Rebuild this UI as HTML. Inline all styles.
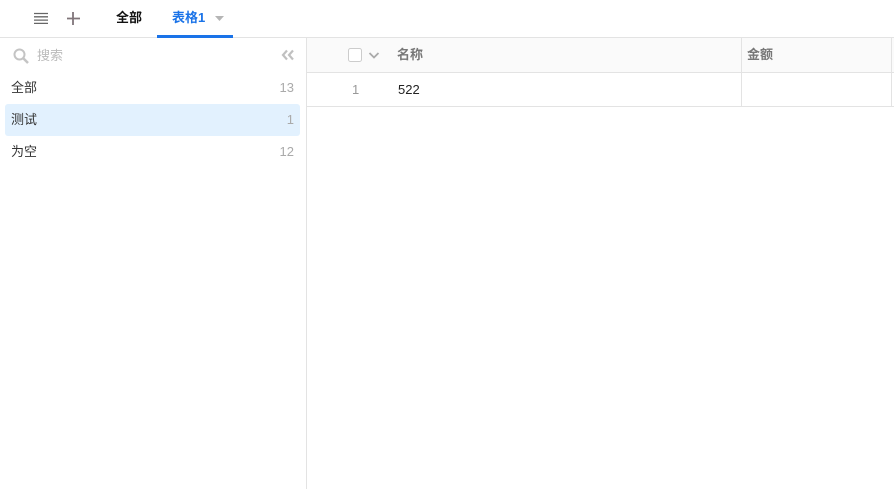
<!DOCTYPE html>
<html><head><meta charset="utf-8">
<style>
html,body{margin:0;padding:0;background:#fff}
body{width:894px;height:489px;position:relative;overflow:hidden;font-family:"Liberation Sans","Noto Sans CJK SC",sans-serif;font-size:13px;color:#333}
.a{position:absolute;white-space:nowrap;line-height:18px;z-index:2}
.l{position:absolute;background:#e3e3e3}
svg{position:absolute;overflow:visible;z-index:3}
</style></head><body>
<svg style="left:0;top:0" width="894" height="489" fill="none">
<path d="M34 13.500H48M34 16.800H48M34 20.100H48M34 23.400H48" stroke="#666" stroke-width="1.300"/>
<path d="M73 12V25M67 18.500H80" stroke="#80757a" stroke-width="1.800"/>
<path d="M215 16H224L219.500 21Z" fill="#b5b5b5"/>
<circle cx="19.500" cy="54.500" r="5" stroke="#c4c4c4" stroke-width="2"/>
<path d="M23 58L28 63" stroke="#c4c4c4" stroke-width="2.500"/>
<path d="M287 50.500L283 55L287 59.500M293 50.500L289 55L293 59.500" stroke="#c0c0c0" stroke-width="2.200"/>
<rect x="348.500" y="48.500" width="13" height="13" rx="2" stroke="#ccc" fill="#fff"/>
<path d="M369.500 53L374 57.500L378.500 53" stroke="#aaa" stroke-width="1.800"/>
</svg>
<div class="a" style="left:116px;top:9px;font-weight:bold;color:#111">全部</div>
<div class="a" style="left:172px;top:9px;font-weight:bold;color:#1a73e8">表格1</div>
<div class="l" style="left:0;top:37px;width:894px;height:1px"></div>
<div style="position:absolute;left:157px;top:35px;width:76px;height:3px;background:#1a73e8"></div>
<div class="l" style="left:306px;top:38px;width:1px;height:451px"></div>
<div class="a" style="left:37px;top:47px;color:#bbb">搜索</div>
<div style="position:absolute;left:5px;top:104px;width:295px;height:32px;background:#e2f1fe;border-radius:3px"></div>
<div class="a" style="left:11px;top:79px">全部</div>
<div class="a" style="right:600px;top:79px;color:#aaa">13</div>
<div class="a" style="left:11px;top:111px">测试</div>
<div class="a" style="right:600px;top:111px;color:#aaa">1</div>
<div class="a" style="left:11px;top:143px">为空</div>
<div class="a" style="right:600px;top:143px;color:#aaa">12</div>
<div style="position:absolute;left:307px;top:38px;width:587px;height:34px;background:#fafafa"></div>
<div class="l" style="left:307px;top:72px;width:587px;height:1px"></div>
<div class="l" style="left:307px;top:106px;width:587px;height:1px"></div>
<div class="l" style="left:741px;top:38px;width:1px;height:68px"></div>
<div class="l" style="left:891px;top:38px;width:1px;height:68px"></div>
<div class="a" style="left:397px;top:46px;font-weight:bold;color:#777">名称</div>
<div class="a" style="left:747px;top:46px;font-weight:bold;color:#777">金额</div>
<div class="a" style="left:352px;top:81px;color:#999">1</div>
<div class="a" style="left:398px;top:81px;color:#222">522</div>
</body></html>
